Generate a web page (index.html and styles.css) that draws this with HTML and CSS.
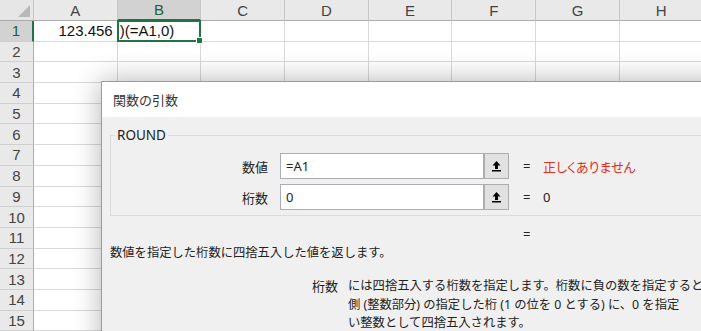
FILE: index.html
```html
<!DOCTYPE html>
<html lang="ja">

<head>
    <meta charset="UTF-8">
    <title>関数の引数</title>
    <link rel="stylesheet" href="styles.css">
</head>

<body>
    <div class="sheet">
        <div class="corner"><span class="corner-mark"></span></div>
        <div class="col-head">A</div>
        <div class="col-head active">B</div>
        <div class="col-head">C</div>
        <div class="col-head">D</div>
        <div class="col-head">E</div>
        <div class="col-head">F</div>
        <div class="col-head">G</div>
        <div class="col-head">H</div>

        <div class="row-head active">1</div>
        <div class="cell num">123.456</div>
        <div class="cell selected">)(=A1,0)<span class="fill-handle"></span></div>
        <div class="cell"></div><div class="cell"></div><div class="cell"></div><div class="cell"></div><div class="cell"></div><div class="cell"></div>

        <div class="row-head">2</div>
        <div class="cell"></div><div class="cell"></div><div class="cell"></div><div class="cell"></div><div class="cell"></div><div class="cell"></div><div class="cell"></div><div class="cell"></div>
        <div class="row-head">3</div>
        <div class="cell"></div><div class="cell"></div><div class="cell"></div><div class="cell"></div><div class="cell"></div><div class="cell"></div><div class="cell"></div><div class="cell"></div>
        <div class="row-head">4</div>
        <div class="cell"></div><div class="cell"></div><div class="cell"></div><div class="cell"></div><div class="cell"></div><div class="cell"></div><div class="cell"></div><div class="cell"></div>
        <div class="row-head">5</div>
        <div class="cell"></div><div class="cell"></div><div class="cell"></div><div class="cell"></div><div class="cell"></div><div class="cell"></div><div class="cell"></div><div class="cell"></div>
        <div class="row-head">6</div>
        <div class="cell"></div><div class="cell"></div><div class="cell"></div><div class="cell"></div><div class="cell"></div><div class="cell"></div><div class="cell"></div><div class="cell"></div>
        <div class="row-head">7</div>
        <div class="cell"></div><div class="cell"></div><div class="cell"></div><div class="cell"></div><div class="cell"></div><div class="cell"></div><div class="cell"></div><div class="cell"></div>
        <div class="row-head">8</div>
        <div class="cell"></div><div class="cell"></div><div class="cell"></div><div class="cell"></div><div class="cell"></div><div class="cell"></div><div class="cell"></div><div class="cell"></div>
        <div class="row-head">9</div>
        <div class="cell"></div><div class="cell"></div><div class="cell"></div><div class="cell"></div><div class="cell"></div><div class="cell"></div><div class="cell"></div><div class="cell"></div>
        <div class="row-head">10</div>
        <div class="cell"></div><div class="cell"></div><div class="cell"></div><div class="cell"></div><div class="cell"></div><div class="cell"></div><div class="cell"></div><div class="cell"></div>
        <div class="row-head">11</div>
        <div class="cell"></div><div class="cell"></div><div class="cell"></div><div class="cell"></div><div class="cell"></div><div class="cell"></div><div class="cell"></div><div class="cell"></div>
        <div class="row-head">12</div>
        <div class="cell"></div><div class="cell"></div><div class="cell"></div><div class="cell"></div><div class="cell"></div><div class="cell"></div><div class="cell"></div><div class="cell"></div>
        <div class="row-head">13</div>
        <div class="cell"></div><div class="cell"></div><div class="cell"></div><div class="cell"></div><div class="cell"></div><div class="cell"></div><div class="cell"></div><div class="cell"></div>
        <div class="row-head">14</div>
        <div class="cell"></div><div class="cell"></div><div class="cell"></div><div class="cell"></div><div class="cell"></div><div class="cell"></div><div class="cell"></div><div class="cell"></div>
        <div class="row-head">15</div>
        <div class="cell"></div><div class="cell"></div><div class="cell"></div><div class="cell"></div><div class="cell"></div><div class="cell"></div><div class="cell"></div><div class="cell"></div>
    </div>

    <div class="dialog">
        <div class="dialog-title">関数の引数</div>
        <div class="dialog-body">
            <fieldset class="func-group">
                <legend>ROUND</legend>
                <div class="args">
                    <div class="arg-row">
                        <div class="arg-label">数値</div>
                        <div class="arg-input">=A1</div>
                        <div class="ref-btn">
                            <svg width="11" height="12" viewBox="0 0 11 12">
                                <path d="M5.5 1 L1.5 5.5 H4 V9 H7 V5.5 H9.5 Z" fill="#000"/>
                                <rect x="1" y="10" width="9" height="1.5" fill="#000"/>
                            </svg>
                        </div>
                        <div class="eq">=</div>
                        <div class="result error">正しくありません</div>
                    </div>
                    <div class="arg-row">
                        <div class="arg-label">桁数</div>
                        <div class="arg-input">0</div>
                        <div class="ref-btn">
                            <svg width="11" height="12" viewBox="0 0 11 12">
                                <path d="M5.5 1 L1.5 5.5 H4 V9 H7 V5.5 H9.5 Z" fill="#000"/>
                                <rect x="1" y="10" width="9" height="1.5" fill="#000"/>
                            </svg>
                        </div>
                        <div class="eq">=</div>
                        <div class="result">0</div>
                    </div>
                </div>
            </fieldset>

            <div class="total">=</div>
            <div class="func-desc">数値を指定した桁数に四捨五入した値を返します。</div>

            <div class="arg-help">
                <div class="help-label">桁数</div>
                <div class="help-text">には四捨五入する桁数を指定します。桁数に負の数を指定すると<br>側 (整数部分) の指定した桁 (1 の位を 0 とする) に、0 を指定<br>い整数として四捨五入されます。</div>
            </div>
        </div>
    </div>
</body>

</html>
```

FILE: styles.css
```css
body {
    margin: 0;
    width: 701px;
    height: 331px;
    overflow: hidden;
    background-color: #fff;
    font-family: 'Liberation Sans', Arial, sans-serif;
    position: relative;
}

/* spreadsheet */

.sheet {
    display: grid;
    grid-template-columns: 34px repeat(8, 83.7px);
    grid-template-rows: 21px;
    grid-auto-rows: 20.7px;
}

.corner {
    background-color: #e6e6e6;
    border-right: 1px solid #c6c6c6;
    border-bottom: 1px solid #ababab;
    box-sizing: border-box;
    position: relative;
}

.corner-mark {
    position: absolute;
    right: 3px;
    bottom: 3px;
    width: 0;
    height: 0;
    border-left: 12px solid transparent;
    border-bottom: 12px solid #b9b9b9;
}

.col-head {
    background-color: #e9e9e9;
    border-right: 1px solid #c6c6c6;
    border-bottom: 1px solid #ababab;
    box-sizing: border-box;
    font-size: 15px;
    color: #444;
    display: flex;
    align-items: center;
    justify-content: center;
}

.col-head.active {
    background-color: #d2d2d2;
    border-bottom: 2px solid #217346;
    color: #1f5e3a;
}

.row-head {
    background-color: #e9e9e9;
    border-right: 1px solid #ababab;
    border-bottom: 1px solid #cfcfcf;
    box-sizing: border-box;
    font-size: 15px;
    color: #444;
    display: flex;
    align-items: center;
    justify-content: center;
}

.row-head.active {
    background-color: #d2d2d2;
    border-right: 2px solid #217346;
    color: #1f5e3a;
}

.cell {
    border-right: 1px solid #d9d9d9;
    border-bottom: 1px solid #d9d9d9;
    box-sizing: border-box;
    font-size: 15px;
    color: #111;
    display: flex;
    align-items: center;
    white-space: nowrap;
}

.cell.num {
    justify-content: flex-end;
    padding-right: 4px;
}

.cell.selected {
    border: 2px solid #217346;
    margin: -1px 0 0 -1px;
    padding-left: 1px;
    position: relative;
}

.fill-handle {
    position: absolute;
    right: -4px;
    bottom: -4px;
    width: 5px;
    height: 5px;
    background-color: #217346;
    border: 1px solid #fff;
}

/* dialog */

.dialog {
    position: absolute;
    left: 101px;
    top: 81px;
    width: 640px;
    height: 270px;
    background-color: #f0f0f0;
    border: 1px solid #9a9a9a;
    box-shadow: 0 0 26px rgba(0, 0, 0, 0.3);
    font-family: 'Noto Sans', 'Noto Sans CJK JP', sans-serif;
    color: #222;
}

.dialog-title {
    height: 35px;
    background-color: #fff;
    padding-left: 11px;
    display: flex;
    align-items: center;
    font-size: 13px;
    color: #333;
}

.dialog-body {
    padding-left: 8px;
}

.func-group {
    margin: 10px 0 0 0;
    padding: 0 0 5px 0;
    border: 1px solid #dcdcdc;
    width: 640px;
}

.func-group legend {
    margin-left: 4px;
    padding: 0 2px;
    font-size: 13.5px;
    line-height: 16px;
    color: #222;
}

.args {
    margin-top: 10px;
    display: flex;
    flex-direction: column;
    gap: 5px;
}

.arg-row {
    display: flex;
    align-items: center;
    height: 26px;
}

.arg-label {
    width: 157px;
    margin-right: 12px;
    text-align: right;
    font-size: 13px;
}

.arg-input {
    width: 204px;
    height: 26px;
    box-sizing: border-box;
    border: 1px solid #abadb3;
    background-color: #fff;
    padding-left: 5px;
    font-size: 13px;
    line-height: 24px;
}

.ref-btn {
    width: 25px;
    height: 26px;
    box-sizing: border-box;
    border: 1px solid #adadad;
    background-color: #e1e1e1;
    display: flex;
    align-items: center;
    justify-content: center;
}

.eq {
    margin-left: 14px;
    width: 20px;
    font-size: 13px;
}

.result {
    font-size: 13px;
}

.result.error {
    color: #e0301e;
    font-feature-settings: "palt";
}

.total {
    margin-top: 9px;
    padding-left: 413px;
    height: 18px;
    line-height: 18px;
    font-size: 13px;
}

.func-desc {
    margin-top: 1px;
    font-size: 12.3px;
    line-height: 18px;
    white-space: nowrap;
}

.arg-help {
    margin-top: 15px;
    padding-left: 202px;
    display: flex;
    white-space: nowrap;
}

.help-label {
    width: 36px;
    font-size: 13px;
    line-height: 18.7px;
}

.help-text {
    font-size: 12.3px;
    line-height: 18.7px;
}
```
